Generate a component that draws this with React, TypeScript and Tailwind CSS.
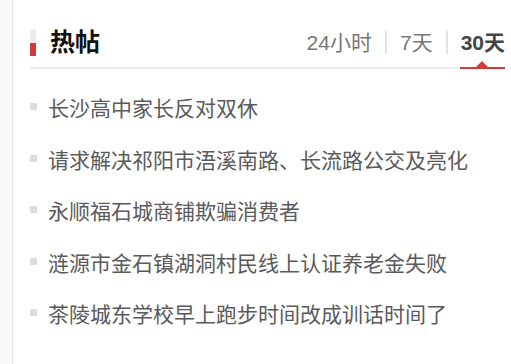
const items = [
    "长沙高中家长反对双休",
    "请求解决祁阳市浯溪南路、长流路公交及亮化",
    "永顺福石城商铺欺骗消费者",
    "涟源市金石镇湖洞村民线上认证养老金失败",
    "茶陵城东学校早上跑步时间改成训话时间了",
];

const tabs = ["24小时", "7天", "30天"];

export default function App() {
    const active = 2;
    return (
        <div
            className="flex h-[364px] w-[511px] bg-white"
            style={{ fontFamily: '"Liberation Sans", "Noto Sans CJK SC", sans-serif' }}
        >
            <div className="w-[13px] shrink-0 border-r border-[#e8e8e8] bg-[#f8f9fb]" />
            <div className="flex-1 pl-[17px] pr-[6px] pt-[26px]">
                <div className="flex h-[43px] items-center border-b-2 border-[#eaedf6] pb-[8px]">
                    <div className="flex h-[27px] w-[6px] flex-col">
                        <div className="h-[14px] bg-[#ececec]" />
                        <div className="flex-1 bg-[#d23a3a]" />
                    </div>
                    <h2 className="ml-[14px] text-[25px] font-bold leading-none text-[#111]">热帖</h2>
                    <div className="ml-auto flex items-center text-[21px] leading-none text-[#777]">
                        {tabs.map((t, i) => (
                            <div key={t} className="flex items-center">
                                {i > 0 && <span className="mx-[13px] h-[23px] w-[2px] bg-[#dfe2e6]" />}
                                <span
                                    className={
                                        i === active
                                            ? "relative font-bold text-[#444]"
                                            : "relative"
                                    }
                                >
                                    {t}
                                    {i === active && (
                                        <span className="absolute -bottom-[16px] -left-[1px] right-0 h-[2px] bg-[#d23a3a]">
                                            <span className="absolute bottom-[2px] left-1/2 h-0 w-0 -translate-x-1/2 border-x-[6px] border-b-[6px] border-x-transparent border-b-[#d23a3a]" />
                                        </span>
                                    )}
                                </span>
                            </div>
                        ))}
                    </div>
                </div>
                <ul className="mt-[13px]">
                    {items.map((t) => (
                        <li key={t} className="flex h-[51.5px] items-center">
                            <span className="mb-[2px] h-[7px] w-[7px] shrink-0 bg-[#dcdcdc]" />
                            <span className="ml-[11px] whitespace-nowrap pt-[2px] text-[21px] leading-none text-[#5a5a5a]">{t}</span>
                        </li>
                    ))}
                </ul>
            </div>
        </div>
    );
}
